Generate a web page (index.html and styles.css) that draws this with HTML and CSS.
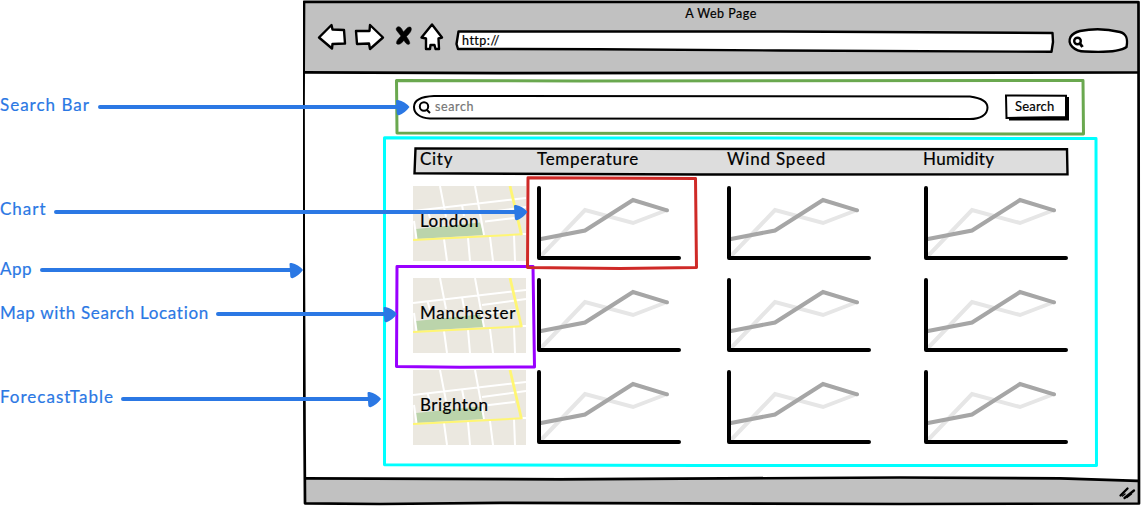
FILE: index.html
```html
<!DOCTYPE html>
<html lang="en">
<head>
<meta charset="utf-8">
<title>A Web Page</title>
<link rel="stylesheet" href="styles.css">
</head>
<body>
<svg class="defs" width="0" height="0" aria-hidden="true">
  <symbol id="chart" viewBox="0 0 146 76">
    <g fill="none" stroke-width="4" stroke-linecap="round">
      <path stroke="#e6e6e6" d="M4 70 48 24 96 37 130 24"/>
      <path stroke="#a6a6a6" d="M4 53 48 44.500 96 14 130 24.300"/>
      <path stroke="#000" stroke-linejoin="round" d="M2 2V72H142"/>
    </g>
  </symbol>
  <symbol id="map" viewBox="0 0 113 75">
    <path fill="#ebe8e0" d="M0 0H113V75H0Z"/>
    <path fill="#bbd4ab" d="M3 43 67 36.500 71 49 3.500 53Z"/>
    <g fill="none" stroke="#fff" stroke-width="2">
      <path d="M27 0 33 31M62 0 71 49M0 25 113 12M69 27 113 21M72 35.500 102 32M14.500 23 17 32M49 19 51 30M1 35 3.500 53M31 53 34 75M55 52 57 75M77 51 80 75M101 49 102 75M108 48H113"/>
    </g>
    <path fill="none" stroke="#fff673" stroke-width="2" d="M0 54 109 48.300"/>
    <path fill="none" stroke="#fff673" stroke-width="2.800" d="M97 0 108.500 49"/>
  </symbol>
</svg>

<div class="stage">
  <main class="browser">
    <svg class="sketch" viewBox="303 0 838 506" aria-hidden="true">
      <path fill="#c1c1c1" d="M304 2H1138V73H304ZM305 478 1070 477.500 1138 481V503H305Z"/>
      <g fill="none" stroke="#000" stroke-width="2.700" stroke-linejoin="round">
        <path d="M304 1.800 1138.500 2.200 1139 503.500 900 504 500 502.800 380 504 305 503.300 304.500 430 303.700 250 303.500 100Z"/>
        <path d="M304 72.300 500 73.200 780 72.800 1138 72.500M305 478.300 560 479.300 900 477.500 1060 478.300 1138 480.800"/>
      </g>
      <path fill="none" stroke="#000" stroke-width="2.300" stroke-linecap="round" d="M1120.500 495.500 1127.500 488.500M1124.500 498 1134 490.500"/>
      <path fill="none" stroke="#000" stroke-width="1.500" stroke-linecap="round" d="M1122.500 496 1125 494M1127 497.500 1131.500 494"/>
    </svg>

    <header class="chrome">
      <h1 class="title">A Web Page</h1>
      <div class="toolbar">
        <svg class="icon-back" viewBox="316 22 34 34"><path d="M319 37.500 331.500 25 332.500 29.500 344 30 345 43.500 332.500 44 332 48.500Z"/></svg>
        <svg class="icon-forward" viewBox="350 22 40 34"><path d="M356 31 369.500 31 370 25 383 37.500 370 49 369 43.500 357 44Z"/></svg>
        <svg class="icon-stop" viewBox="390 22 26 34"><path d="M397.500 27C395.500 28 396 30 397 31L401 36C398.500 38.500 396 41 396.500 43.500 399 46 402 42.500 404 40.500 405.500 43 407.500 45.500 409.500 44 410.500 42 408 39 406.500 36.500 409 34 412.500 30.500 411 27.500 408 25.500 405.500 30 403.500 32 402 29 400 25.500 397.500 27Z"/></svg>
        <svg class="icon-home" viewBox="416 22 34 34"><path d="M432 24.500 442 37.500 438.500 38.500 439 49 435.500 49 434.500 45 430.500 45 430 49 426 49 426 38.500 421.500 37.500Z"/></svg>
        <div class="address">
          <svg class="sketch" viewBox="450 22 610 34" aria-hidden="true"><path d="M458.500 31.500 780 31.500 1052.500 33 1053 42 1051.500 51.800 780 50.500 600 49.200 458 49 456.500 44Z"/></svg>
          <span>http://</span>
        </div>
        <svg class="icon-find" viewBox="1060 22 79 34"><path d="M1080 31C1092 28.500 1108 29 1120 32 1127 34 1128 39 1126.500 47 1120 52 1105 52.500 1085 51.500 1074 51.500 1067 44 1070.500 37 1073 33 1076 32 1080 31Z"/><circle cx="1077.500" cy="41" r="3.300"/><path class="handle" d="M1080 43.500 1082.500 47"/></svg>
      </div>
    </header>

    <section class="search-bar">
      <svg class="sketch green" viewBox="394 77 693 59" aria-hidden="true"><path d="M396.500 80.500 580 81 1083 80.500 1083.500 134 397 133Z"/></svg>
      <div class="search-field">
        <svg class="sketch" viewBox="412 93 578 29" aria-hidden="true"><path d="M434 96 970 96.500C981 98 987.500 102 987.500 107.500 987.500 115 980 119 970 119L430 118.500C419 118 414 113 414 107 414 100 422 96.500 434 96Z"/></svg>
        <svg class="lens" viewBox="418 100 14 16"><circle cx="424" cy="106.500" r="4.200"/><path d="M427 110 430 113"/></svg>
        <span>search</span>
      </div>
      <div class="search-button">
        <svg class="sketch" viewBox="1003 93 67 29" aria-hidden="true"><path class="shadow" d="M1009 97H1069V120.500H1009Z"/><path d="M1006 95.500 1066 95.800 1066 117 1006.500 118Z"/></svg>
        <span>Search</span>
      </div>
    </section>

    <section class="forecast">
      <svg class="sketch cyan" viewBox="382 136 718 333" aria-hidden="true"><path d="M384.500 137.800 900 138.200 1096 138.500 1096.500 465.500 700 465.500 384.500 464.800Z"/></svg>
      <div class="table-head">
        <svg class="sketch" viewBox="413 147 656 29" aria-hidden="true"><path d="M415.500 148.500 1067 149.300 1067.500 174.300 700 174.500 414.500 173.300Z"/></svg>
        <span>City</span><span class="temperature">Temperature</span><span class="wind">Wind Speed</span><span class="humidity">Humidity</span>
      </div>
      <div class="row">
        <div class="city"><svg class="sketch"><use href="#map"/></svg><span class="london">London</span></div>
        <svg class="chart"><use href="#chart"/></svg><svg class="chart"><use href="#chart"/></svg><svg class="chart"><use href="#chart"/></svg>
      </div>
      <div class="row">
        <div class="city"><svg class="sketch"><use href="#map"/></svg><span class="manchester">Manchester</span></div>
        <svg class="chart"><use href="#chart"/></svg><svg class="chart"><use href="#chart"/></svg><svg class="chart"><use href="#chart"/></svg>
      </div>
      <div class="row">
        <div class="city"><svg class="sketch"><use href="#map"/></svg><span class="brighton">Brighton</span></div>
        <svg class="chart"><use href="#chart"/></svg><svg class="chart"><use href="#chart"/></svg><svg class="chart"><use href="#chart"/></svg>
      </div>
    </section>
  </main>

  <svg class="arrows" viewBox="0 0 1141 506" aria-hidden="true">
    <g fill="none" stroke-width="3" stroke-linejoin="round">
      <path stroke="#9900ff" d="M397 266.500 533 266.500 534.500 367 460 367.300 396.500 366.500Z"/>
      <path stroke="#cf2a27" d="M528 177.800 695.500 178.500 696.500 267.500 620 268.500 527.500 267.500Z"/>
    </g>
    <g stroke="#2b78e4" stroke-width="4" stroke-linecap="round">
      <path d="M100 107H398M56 212H516M42 270H292M218 314H386M123 399H370"/>
    </g>
    <g fill="#2b78e4">
      <path id="tip" d="M396 101Q396 99.500 398 100 405 101.500 409.500 107 404.500 113.500 399 115.300 397 115.500 396.800 113.500Z"/>
      <use href="#tip" x="118" y="105"/>
      <use href="#tip" x="-106.500" y="163"/>
      <use href="#tip" x="-12.500" y="207"/>
      <use href="#tip" x="-28.500" y="292"/>
    </g>
  </svg>
  <aside class="notes">
    <p class="note-search">Search Bar</p>
    <p class="note-chart">Chart</p>
    <p class="note-app">App</p>
    <p class="note-map">Map with Search Location</p>
    <p class="note-table">ForecastTable</p>
  </aside>
</div>
</body>
</html>
```

FILE: styles.css
```css
* { box-sizing: border-box; }

body {
  margin: 0;
  background: #fff;
  color: #000;
  font-family: Lato, "Liberation Sans", sans-serif;
  -webkit-text-stroke: 0.2px currentColor;
}

svg { display: block; flex: none; }

.defs { position: absolute; }

.stage {
  position: relative;
  width: 1141px;
  height: 506px;
  overflow: hidden;
}

.browser {
  position: relative;
  width: 838px;
  height: 506px;
  margin-left: 303px;
}

/* Hand-drawn outline behind its container's content */
.sketch {
  position: absolute;
  inset: 0;
  width: 100%;
  height: 100%;
}

.sketch ~ * { position: relative; }

.chrome { height: 77px; }

.title {
  margin: 0;
  padding-top: 5px;
  height: 22px;
  font-size: 12.5px;
  line-height: 17px;
  font-weight: 400;
  letter-spacing: 0.5px;
  text-align: center;
  text-indent: -2px;
}

.toolbar {
  display: flex;
  height: 34px;
  padding-left: 13px;
}

.toolbar svg {
  height: 34px;
  fill: #fff;
  stroke: #000;
  stroke-width: 2.4;
  stroke-linejoin: round;
}

.icon-back { width: 34px; }
.icon-forward { width: 40px; }
.toolbar .icon-stop { width: 26px; fill: #000; stroke-width: 0.5; }
.icon-home { width: 34px; }
.icon-find { width: 79px; }
.icon-find .handle { stroke-width: 3; }

.address {
  position: relative;
  width: 610px;
  padding: 10px 0 0 12px;
  font-size: 12.5px;
  line-height: 18px;
  letter-spacing: 0.5px;
}

.search-bar {
  position: relative;
  display: flex;
  width: 693px;
  height: 59px;
  margin-left: 91px;
  padding: 16px 0 0 18px;
}

.green {
  fill: none;
  stroke: #6aa84f;
  stroke-width: 3;
  stroke-linejoin: round;
}

.search-field {
  display: flex;
  width: 578px;
  height: 29px;
  padding: 7px 0 0 6px;
  color: #777;
  font-size: 12.5px;
  line-height: 14px;
  letter-spacing: 0.6px;
}

.search-field .sketch,
.search-button .sketch {
  fill: #fff;
  stroke: #000;
  stroke-width: 2;
}

.lens {
  width: 14px;
  height: 16px;
  margin-right: 3px;
  fill: none;
  stroke: #000;
  stroke-width: 2;
}

.search-button {
  width: 67px;
  height: 29px;
  margin-left: 13px;
  padding: 4px 0 0 12px;
  font-size: 13px;
  line-height: 19px;
  letter-spacing: 0.2px;
}

.search-button .shadow { fill: #000; stroke: none; }

.forecast {
  position: relative;
  width: 718px;
  height: 333px;
  margin-left: 79px;
  padding: 11px 0 0 31px;
  font-size: 17px;
  line-height: 24px;
}

.cyan {
  fill: none;
  stroke: #00ffff;
  stroke-width: 3;
  stroke-linejoin: round;
}

.table-head,
.row {
  display: grid;
  grid-template-columns: 124px 190px 197px 145px;
}

.table-head {
  position: relative;
  width: 656px;
  height: 29px;
  margin-bottom: 10px;
  letter-spacing: 0.7px;
}

.table-head .sketch {
  fill: #ddd;
  stroke: #000;
  stroke-width: 2.4;
}

.table-head span:first-of-type { padding-left: 7px; }
.table-head .wind { letter-spacing: 0.8px; }
.table-head .humidity { margin-left: -1px; letter-spacing: 0.3px; }

.row { height: 92px; }

.city {
  position: relative;
  width: 113px;
  height: 75px;
  padding: 23px 0 0 7px;
  letter-spacing: 0.5px;
}

.manchester { letter-spacing: 0.75px; }

.chart { width: 146px; height: 76px; }

.arrows {
  position: absolute;
  inset: 0;
  width: 1141px;
  height: 506px;
}

.notes {
  position: absolute;
  top: 0;
  left: 0;
  display: grid;
  grid-template-rows: 104px 60px 44px 84px 24px;
  padding-top: 93px;
  color: #2b78e4;
  font-size: 17px;
  line-height: 24px;
  letter-spacing: 1px;
  white-space: nowrap;
}

.notes p { margin: 0; }
.notes .note-app { letter-spacing: 0.5px; }
.notes .note-map { letter-spacing: 0.67px; }
```
